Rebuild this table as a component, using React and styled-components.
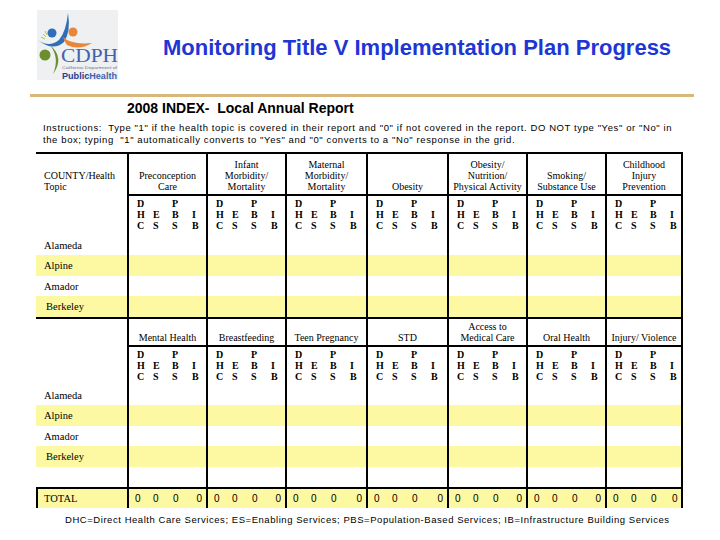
import React from "react";
import styled, { createGlobalStyle } from "styled-components";

const YELLOW = "#fdf9a2";
const COLS = "91px 79px 79px 81px 81px 79px 79px 78px";

const GlobalStyle = createGlobalStyle`
  html, body { margin: 0; padding: 0; background: #fff; }
  body {
    width: 720px;
    height: 540px;
    overflow: hidden;
    font-family: "Liberation Sans", Arial, sans-serif;
  }
  * { box-sizing: border-box; }
`;

const Page = styled.div`
  width: 720px;
  height: 540px;
  color: #000;
`;

const Header = styled.header`
  display: flex;
  align-items: center;
  padding: 10px 0 0 37px;
  height: 80px;
`;

const Title = styled.h1`
  margin: 0 0 0 45px;
  padding-top: 6px;
  font-size: 22px;
  font-weight: bold;
  color: #1f35d6;
  white-space: nowrap;
  font-family: "Liberation Sans", Arial, sans-serif;
`;

const Rule = styled.div`
  margin: 14px 0 0 30px;
  width: 664px;
  height: 3px;
  background: #d8b67c;
`;

const Subtitle = styled.h2`
  margin: 4px 0 0 127px;
  font-size: 14px;
  line-height: 15px;
  font-weight: bold;
  white-space: pre;
`;

const Instructions = styled.p`
  margin: 6px 0 0 43px;
  font-size: 9.5px;
  line-height: 12px;
  letter-spacing: 0.6px;
  white-space: pre;
`;

const Table = styled.div`
  margin: 6px 0 0 36px;
  width: 647px;
  font-family: "Liberation Serif", "Times New Roman", serif;
  font-size: 10px;
`;

const Row = styled.div`
  display: grid;
  grid-template-columns: ${COLS};
  height: ${(p) => p.$h}px;
  background: ${(p) => (p.$yellow ? YELLOW : "#fff")};
  border-top: ${(p) => (p.$top ? "2px solid #000" : "none")};
`;

const GroupCell = styled.div`
  border-left: 2px solid #000;
  &:last-child { border-right: 2px solid #000; }
`;

const TitleCell = styled(GroupCell)`
  display: flex;
  align-items: flex-end;
  justify-content: center;
  text-align: center;
  line-height: 11px;
  padding-bottom: 2px;
  border-bottom: 2px solid #000;
`;

const CountyHead = styled.div`
  display: flex;
  align-items: flex-end;
  padding: 0 0 4px 8px;
  line-height: 11px;
`;

const NameCell = styled.div`
  display: flex;
  align-items: center;
  padding-left: ${(p) => (p.$indent ? 10 : p.$edge ? 6 : 8)}px;
  font-size: 10.5px;
  border-left: ${(p) => (p.$edge ? "2px solid #000" : "none")};
`;

const Letters = styled(GroupCell)`
  display: grid;
  grid-template-columns: 16px 19px 20px 1fr;
  padding: 2px 0 0 8px;
  font-weight: bold;
  line-height: 11px;
`;

const LetterCol = styled.div`
  display: flex;
  flex-direction: column;
  span { display: block; height: 11px; }
`;

const Zeros = styled(GroupCell)`
  display: grid;
  grid-template-columns: 18px 20px 21px 1fr;
  align-items: center;
  padding: 0 4px 0 6px;
  font-family: "Liberation Sans", Arial, sans-serif;
  font-size: 10px;
  span:last-child { text-align: right; }
`;

const Footer = styled.p`
  margin: 6px 0 0 65px;
  font-size: 9.5px;
  line-height: 12px;
  letter-spacing: 0.55px;
  white-space: nowrap;
`;

const topics1 = [
  ["Preconception", "Care"],
  ["Infant", "Morbidity/", "Mortality"],
  ["Maternal", "Morbidity/", "Mortality"],
  ["Obesity"],
  ["Obesity/", "Nutrition/", "Physical Activity"],
  ["Smoking/", "Substance Use"],
  ["Childhood", "Injury", "Prevention"],
];

const topics2 = [
  ["Mental Health"],
  ["Breastfeeding"],
  ["Teen Pregnancy"],
  ["STD"],
  ["Access to", "Medical Care"],
  ["Oral Health"],
  ["Injury/ Violence"],
];

const counties = [
  { name: "Alameda", h: 20 },
  { name: "Alpine", h: 21, yellow: true },
  { name: "Amador", h: 20 },
  { name: "Berkeley", h: 21, yellow: true, indent: true },
];

const letterCols = [
  ["D", "H", "C"],
  ["", "E", "S"],
  ["P", "B", "S"],
  ["", "I", "B"],
];

function Logo() {
  return (
    <svg width="81" height="70" viewBox="0 0 81 70">
      <rect width="81" height="70" fill="#eef0f1" />
      <path d="M6 24 L9 27 M4 27 L8 29 M8 21 L10 25" stroke="#b8c43a" strokeWidth="1" />
      <circle cx="15" cy="23" r="4.5" fill="#2f6eb8" />
      <path d="M1 30 Q12 38 22 30 Q29 22 31 3 Q34 22 27 32 Q16 42 1 30 Z" fill="#2f6eb8" />
      <circle cx="36" cy="22" r="4.5" fill="#e8863a" />
      <path d="M26 27 Q34 35 55 33 Q42 41 30 35 Q27 31 26 27 Z" fill="#e8863a" />
      <circle cx="8" cy="45" r="5.5" fill="#6b8e2e" />
      <path d="M13 35 Q28 48 16 64 Q23 48 13 35 Z" fill="#6b8e2e" />
      <text x="24" y="52" fontFamily="Liberation Serif, serif" fontSize="19" fill="#4262ad" textLength="57" lengthAdjust="spacingAndGlyphs">CDPH</text>
      <text x="25" y="59" fontFamily="Liberation Sans, sans-serif" fontSize="4" fill="#6a7490" textLength="55" lengthAdjust="spacingAndGlyphs">California Department of</text>
      <text x="25" y="69" fontFamily="Liberation Sans, sans-serif" fontSize="9" fontWeight="bold" fill="#25408f" textLength="55" lengthAdjust="spacingAndGlyphs">
        Public<tspan fill="#3b63b3">Health</tspan>
      </text>
    </svg>
  );
}

function LetterRow({ h }) {
  return (
    <Row $h={h}>
      <div />
      {topics1.map((_, i) => (
        <Letters key={i}>
          {letterCols.map((col, j) => (
            <LetterCol key={j}>
              {col.map((l, k) => (
                <span key={k}>{l}</span>
              ))}
            </LetterCol>
          ))}
        </Letters>
      ))}
    </Row>
  );
}

function CountyRows() {
  return counties.map((c) => (
    <Row key={c.name} $h={c.h} $yellow={c.yellow}>
      <NameCell $indent={c.indent}>{c.name}</NameCell>
      {topics1.map((_, i) => (
        <GroupCell key={i} />
      ))}
    </Row>
  ));
}

function TopicHead({ topics, h, county }) {
  return (
    <Row $h={h} $top>
      <CountyHead>{county}</CountyHead>
      {topics.map((t, i) => (
        <TitleCell key={i}>
          <div>
            {t.map((line, k) => (
              <div key={k}>{line}</div>
            ))}
          </div>
        </TitleCell>
      ))}
    </Row>
  );
}

export default function App() {
  return (
    <Page>
      <GlobalStyle />
      <Header>
        <Logo />
        <Title>Monitoring Title V Implementation Plan Progress</Title>
      </Header>
      <Rule />
      <Subtitle>2008 INDEX-  Local Annual Report</Subtitle>
      <Instructions>
        {'Instructions:  Type "1" if the health topic is covered in their report and "0" if not covered in the report. DO NOT type "Yes" or "No" in'}
        <br />
        {'the box; typing  "1" automatically converts to "Yes" and "0" converts to a "No" response in the grid.'}
      </Instructions>
      <Table>
        <TopicHead
          topics={topics1}
          h={44}
          county={
            <span>
              COUNTY/Health
              <br />
              Topic
            </span>
          }
        />
        <LetterRow h={39} />
        <CountyRows />
        <TopicHead topics={topics2} h={30} county={null} />
        <LetterRow h={38} />
        <CountyRows />
        <Row $h={20}>
          <div />
          {topics2.map((_, i) => (
            <GroupCell key={i} />
          ))}
        </Row>
        <Row $h={21} $yellow $top>
          <NameCell $edge>TOTAL</NameCell>
          {topics2.map((_, i) => (
            <Zeros key={i}>
              <span>0</span>
              <span>0</span>
              <span>0</span>
              <span>0</span>
            </Zeros>
          ))}
        </Row>
      </Table>
      <Footer>
        DHC=Direct Health Care Services; ES=Enabling Services; PBS=Population-Based Services; IB=Infrastructure Building Services
      </Footer>
    </Page>
  );
}
